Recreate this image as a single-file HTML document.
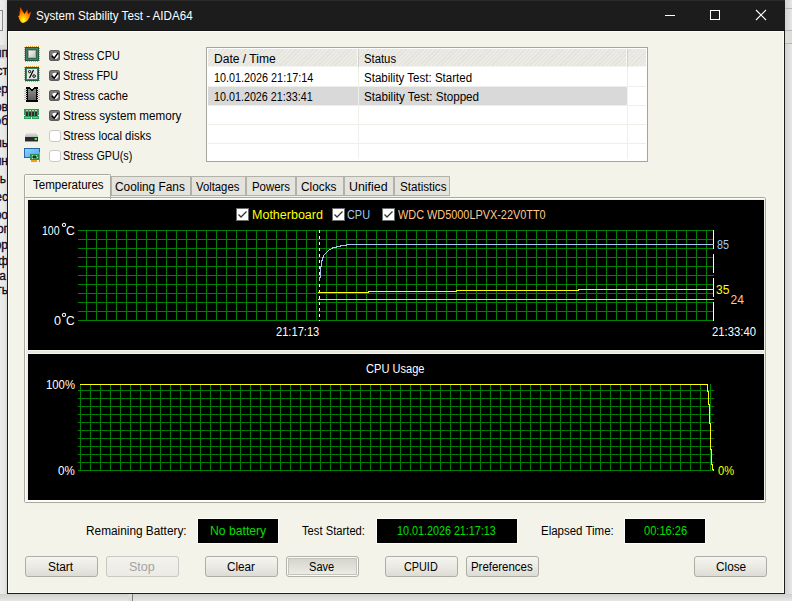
<!DOCTYPE html>
<html><head><meta charset="utf-8">
<style>
*{margin:0;padding:0;box-sizing:border-box}
html,body{width:792px;height:601px;overflow:hidden}
body{position:relative;background:#e3e3e1;font-family:"Liberation Sans",sans-serif;font-size:12px}
.a{position:absolute}
.t{position:absolute;white-space:nowrap;line-height:14px;font-size:12px;transform-origin:0 0}
.bgt{position:absolute;white-space:nowrap;font-size:12px;line-height:14px;color:#10081a;-webkit-text-stroke:0.3px #10081a}
.win{position:absolute;left:7px;top:0;width:778px;height:594px;background:#1c1c1c}
.body{position:absolute;left:8px;top:31px;width:776px;height:562px;background:#f3f3ea;border-top:1px solid #fdfdf8;border-left:1px solid #fdfdf8;border-right:1px solid #fbfbf5;border-bottom:1px solid #fbfbf5}
.cbx{position:absolute;width:12px;height:12px;border-radius:3px}
.cb-on{width:11px;height:11px;border-radius:2px;background:linear-gradient(#7c7c7c,#6a6a6a);border:1px solid #5e5e5e}
.cb-off{background:#fff;border:1px solid #c9c9c5}
.btn{position:absolute;height:21px;border:1px solid #adada6;border-radius:3px;background:linear-gradient(#f6f6f2,#e9e8e1 55%,#dddcd4)}
.tab{position:absolute;top:176px;height:20px;background:#e4e3dc;border:1px solid #b2b1aa}
.lcd{position:absolute;top:518px;height:26px;background:#000;border:1px solid #fdfdf9}
</style></head><body>
<!-- background window left -->
<div class="a" style="left:0;top:0;width:7px;height:601px;background:linear-gradient(90deg,#ececea 0,#e6e6e4 70%,#d4d4d2 100%)"></div>
<div class="a" style="left:0;top:10px;width:3px;height:21px;border:1px solid #8a8a8a;border-left:none;background:#eceef0"></div>
<div class="a" style="left:0;top:45px;width:7px;height:14px;background:#d9d9d6"></div>
<div class="a" style="left:0;top:0;width:7px;height:601px;overflow:hidden">
<div class="bgt" style="right:-1px;top:46px">ип</div>
<div class="bgt" style="right:-1px;top:64px">ст</div>
<div class="bgt" style="right:-1px;top:82px">ер</div>
<div class="bgt" style="right:-1px;top:100px">ов</div>
<div class="bgt" style="right:-1px;top:114px">об</div>
<div class="bgt" style="right:-1px;top:136px">ль</div>
<div class="bgt" style="right:-1px;top:154px">ин</div>
<div class="bgt" style="right:1px;top:172px">ь</div>
<div class="bgt" style="right:-1px;top:190px">ес</div>
<div class="bgt" style="right:-1px;top:208px">ро</div>
<div class="bgt" style="right:-1px;top:222px">ог</div>
<div class="bgt" style="right:-1px;top:238px">ор</div>
<div class="bgt" style="right:-1px;top:254px">оф</div>
<div class="bgt" style="right:1px;top:269px">а</div>
<div class="bgt" style="right:-1px;top:283px">ть</div>
</div>
<!-- background window right -->
<div class="a" style="left:785px;top:0;width:7px;height:601px;background:linear-gradient(90deg,#d2d2d0,#e6e6e4)"></div>
<div class="a" style="left:785px;top:8px;width:7px;height:1px;background:#b8b8b5"></div>
<div class="a" style="left:785px;top:30px;width:7px;height:14px;background:#dcdcd8;border-top:1px solid #b8b8b5;border-bottom:1px solid #b8b8b5"></div>
<!-- bottom shadow -->
<div class="a" style="left:0;top:594px;width:792px;height:7px;background:linear-gradient(#cfcfcd,#e6e6e4)"></div>
<div class="a" style="left:128px;top:594px;width:4px;height:7px;background:#dcdcd6"></div><div class="a" style="left:132px;top:594px;width:1px;height:7px;background:#7e7e7c"></div>

<!-- window -->
<div class="win">
  <div class="a" style="left:0;top:0;width:778px;height:1px;background:#2c2c2c"></div>
  <div class="a" style="left:0;top:30px;width:778px;height:1px;background:#121212"></div>
</div>
<div class="body"></div>
<!-- flame icon -->
<svg class="a" style="left:16px;top:5px" width="18" height="20" viewBox="0 0 18 20">
 <defs><radialGradient id="fl" cx="0.42" cy="0.82" r="0.65"><stop offset="0" stop-color="#ffff20"/><stop offset="0.35" stop-color="#ffc000"/><stop offset="0.75" stop-color="#ff7a00"/><stop offset="1" stop-color="#e84800"/></radialGradient></defs>
 <path d="M4.3 2 C5.5 4 7 6.5 8.5 9 L11.3 4.5 L12 9 L15 6.5 C14.5 10 13.5 13 11.5 15.5 C10 17 8 18 6.5 18 C4.5 17.5 3.5 15 3 13 L2 11 L3.5 10.5 C3.5 7 4 4.5 4.3 2 Z" fill="url(#fl)"/>
</svg>
<!-- title controls -->
<div class="a" style="left:665px;top:15px;width:10px;height:1px;background:#fff"></div>
<div class="a" style="left:710px;top:10px;width:10px;height:10px;border:1px solid #fff"></div>
<svg class="a" style="left:755px;top:9px" width="12" height="12" viewBox="0 0 12 12"><path d="M1 1 L11 11 M11 1 L1 11" stroke="#fff" stroke-width="1.1"/></svg>

<!-- stress icons -->
<svg class="a" style="left:24px;top:46px" width="16" height="16" shape-rendering="crispEdges"><rect x="1" y="1" width="14" height="14" fill="#1f5a3c"/><rect x="2" y="2" width="12" height="12" fill="#3f8060"/><rect x="3" y="3" width="10" height="10" fill="#2f6c4c"/><rect x="2" y="0" width="1" height="1" fill="#d9a03a"/><rect x="4" y="0" width="1" height="1" fill="#d9a03a"/><rect x="6" y="0" width="1" height="1" fill="#d9a03a"/><rect x="8" y="0" width="1" height="1" fill="#d9a03a"/><rect x="10" y="0" width="1" height="1" fill="#d9a03a"/><rect x="12" y="0" width="1" height="1" fill="#d9a03a"/><rect x="14" y="0" width="1" height="1" fill="#d9a03a"/><rect x="1" y="15" width="1" height="1" fill="#d9a03a"/><rect x="3" y="15" width="1" height="1" fill="#d9a03a"/><rect x="5" y="15" width="1" height="1" fill="#d9a03a"/><rect x="7" y="15" width="1" height="1" fill="#d9a03a"/><rect x="9" y="15" width="1" height="1" fill="#d9a03a"/><rect x="11" y="15" width="1" height="1" fill="#d9a03a"/><rect x="13" y="15" width="1" height="1" fill="#d9a03a"/><rect x="0" y="1" width="1" height="1" fill="#d9a03a"/><rect x="0" y="3" width="1" height="1" fill="#d9a03a"/><rect x="0" y="5" width="1" height="1" fill="#d9a03a"/><rect x="0" y="7" width="1" height="1" fill="#d9a03a"/><rect x="0" y="9" width="1" height="1" fill="#d9a03a"/><rect x="0" y="11" width="1" height="1" fill="#d9a03a"/><rect x="0" y="13" width="1" height="1" fill="#d9a03a"/><rect x="15" y="2" width="1" height="1" fill="#d9a03a"/><rect x="15" y="4" width="1" height="1" fill="#d9a03a"/><rect x="15" y="6" width="1" height="1" fill="#d9a03a"/><rect x="15" y="8" width="1" height="1" fill="#d9a03a"/><rect x="15" y="10" width="1" height="1" fill="#d9a03a"/><rect x="15" y="12" width="1" height="1" fill="#d9a03a"/><rect x="15" y="14" width="1" height="1" fill="#d9a03a"/><defs><linearGradient id="cpg" x1="0" y1="0" x2="1" y2="1"><stop offset="0" stop-color="#f6f6f6"/><stop offset="1" stop-color="#c4c4c4"/></linearGradient></defs><rect x="4" y="4" width="8" height="8" fill="#a8a8a8"/><rect x="5" y="5" width="6" height="6" fill="url(#cpg)"/></svg>
<svg class="a" style="left:24px;top:66px" width="16" height="16" shape-rendering="crispEdges"><rect x="1" y="1" width="14" height="14" fill="#1f5a3c"/><rect x="2" y="2" width="12" height="12" fill="#3f8060"/><rect x="3" y="3" width="10" height="10" fill="#2f6c4c"/><rect x="2" y="0" width="1" height="1" fill="#d9a03a"/><rect x="4" y="0" width="1" height="1" fill="#d9a03a"/><rect x="6" y="0" width="1" height="1" fill="#d9a03a"/><rect x="8" y="0" width="1" height="1" fill="#d9a03a"/><rect x="10" y="0" width="1" height="1" fill="#d9a03a"/><rect x="12" y="0" width="1" height="1" fill="#d9a03a"/><rect x="14" y="0" width="1" height="1" fill="#d9a03a"/><rect x="1" y="15" width="1" height="1" fill="#d9a03a"/><rect x="3" y="15" width="1" height="1" fill="#d9a03a"/><rect x="5" y="15" width="1" height="1" fill="#d9a03a"/><rect x="7" y="15" width="1" height="1" fill="#d9a03a"/><rect x="9" y="15" width="1" height="1" fill="#d9a03a"/><rect x="11" y="15" width="1" height="1" fill="#d9a03a"/><rect x="13" y="15" width="1" height="1" fill="#d9a03a"/><rect x="0" y="1" width="1" height="1" fill="#d9a03a"/><rect x="0" y="3" width="1" height="1" fill="#d9a03a"/><rect x="0" y="5" width="1" height="1" fill="#d9a03a"/><rect x="0" y="7" width="1" height="1" fill="#d9a03a"/><rect x="0" y="9" width="1" height="1" fill="#d9a03a"/><rect x="0" y="11" width="1" height="1" fill="#d9a03a"/><rect x="0" y="13" width="1" height="1" fill="#d9a03a"/><rect x="15" y="2" width="1" height="1" fill="#d9a03a"/><rect x="15" y="4" width="1" height="1" fill="#d9a03a"/><rect x="15" y="6" width="1" height="1" fill="#d9a03a"/><rect x="15" y="8" width="1" height="1" fill="#d9a03a"/><rect x="15" y="10" width="1" height="1" fill="#d9a03a"/><rect x="15" y="12" width="1" height="1" fill="#d9a03a"/><rect x="15" y="14" width="1" height="1" fill="#d9a03a"/><rect x="3" y="3" width="10" height="10" fill="#e6e6e6"/><path d="M9.5 4 L5.5 12" stroke="#000" stroke-width="1.2" shape-rendering="auto"/><rect x="4.5" y="4.5" width="2.2" height="2.2" rx="1" fill="none" stroke="#000" stroke-width="1" shape-rendering="auto"/><rect x="8.8" y="8.8" width="2.6" height="2.6" rx="1.2" fill="none" stroke="#000" stroke-width="1" shape-rendering="auto"/></svg>
<svg class="a" style="left:24px;top:87px" width="16" height="15" shape-rendering="crispEdges"><path d="M2 0 H6 L7 2 H9 L10 0 H14 V15 H2 Z" fill="#050505"/><defs><linearGradient id="chg" x1="0" y1="0" x2="0" y2="1"><stop offset="0" stop-color="#8e8e8e"/><stop offset="1" stop-color="#5c5c5c"/></linearGradient></defs><path d="M4 2 H5.5 L7 4 H9 L10.5 2 H12 V13 H4 Z" fill="url(#chg)"/><rect x="0" y="2" width="3" height="1" fill="#b4c4dc"/><rect x="13" y="2" width="3" height="1" fill="#b4c4dc"/><rect x="0" y="4" width="3" height="1" fill="#b4c4dc"/><rect x="13" y="4" width="3" height="1" fill="#b4c4dc"/><rect x="0" y="6" width="3" height="1" fill="#b4c4dc"/><rect x="13" y="6" width="3" height="1" fill="#b4c4dc"/><rect x="0" y="8" width="3" height="1" fill="#b4c4dc"/><rect x="13" y="8" width="3" height="1" fill="#b4c4dc"/><rect x="0" y="10" width="3" height="1" fill="#b4c4dc"/><rect x="13" y="10" width="3" height="1" fill="#b4c4dc"/><rect x="0" y="12" width="3" height="1" fill="#b4c4dc"/><rect x="13" y="12" width="3" height="1" fill="#b4c4dc"/></svg>
<svg class="a" style="left:24px;top:109px" width="15" height="10" shape-rendering="crispEdges"><path d="M0 0 H15 V6 H14 V7 H15 V10 H8 V8 H7 V10 H0 V7 H1 V6 H0 Z" fill="#2f9a5a"/><rect x="2" y="1" width="2" height="1" fill="#c8d8b8"/><rect x="2" y="3" width="2" height="4" fill="#3a2a30"/><rect x="5" y="1" width="2" height="1" fill="#c8d8b8"/><rect x="5" y="3" width="2" height="4" fill="#3a2a30"/><rect x="8" y="1" width="2" height="1" fill="#c8d8b8"/><rect x="8" y="3" width="2" height="4" fill="#3a2a30"/><rect x="11" y="1" width="2" height="1" fill="#c8d8b8"/><rect x="11" y="3" width="2" height="4" fill="#3a2a30"/><rect x="1" y="8" width="5" height="1" fill="#f0a030"/><rect x="9" y="8" width="5" height="1" fill="#f0a030"/></svg>
<svg class="a" style="left:25px;top:133px" width="14" height="9" shape-rendering="crispEdges"><defs><linearGradient id="dkg" x1="0" y1="0" x2="0" y2="1"><stop offset="0" stop-color="#e4e6ea"/><stop offset="1" stop-color="#b4b6ba"/></linearGradient></defs><path d="M1 0 H12 L13 4 H0 Z" fill="url(#dkg)"/><rect x="0" y="4" width="13" height="4" fill="#2a2a2a"/><rect x="0" y="8" width="13" height="1" fill="#9098a0"/><rect x="10" y="5" width="2" height="2" fill="#40f050"/><rect x="9" y="5" width="1" height="2" fill="#2a7a30"/></svg>
<svg class="a" style="left:24px;top:148px" width="16" height="14" shape-rendering="crispEdges"><defs><linearGradient id="gpg" x1="0" y1="0" x2="1" y2="1"><stop offset="0" stop-color="#90d0ff"/><stop offset="1" stop-color="#50a8f0"/></linearGradient></defs><rect x="0" y="0" width="16" height="10" fill="#1e6aa4"/><rect x="1" y="1" width="14" height="8" fill="url(#gpg)"/><rect x="6" y="6" width="9" height="6" fill="#2e8a52"/><rect x="7" y="7" width="7" height="4" fill="#3a9a60"/><rect x="9" y="8" width="3" height="2" fill="#3a2a30"/><rect x="8" y="7" width="1" height="1" fill="#d0d0d0"/><rect x="12" y="7" width="1" height="1" fill="#d0d0d0"/><rect x="8" y="10" width="1" height="1" fill="#d0d0d0"/><rect x="13" y="9" width="1" height="1" fill="#d0d0d0"/><rect x="7" y="12" width="6" height="2" fill="#f0a010"/><rect x="15" y="4" width="1" height="10" fill="#909090"/><rect x="6" y="11" width="1" height="1" fill="#4a6a9a"/></svg>
<!-- checkboxes -->
<div class="cbx cb-on" style="left:49px;top:50px"></div>
<div class="cbx cb-on" style="left:49px;top:70px"></div>
<div class="cbx cb-on" style="left:49px;top:90px"></div>
<div class="cbx cb-on" style="left:49px;top:110px"></div>
<div class="cbx cb-off" style="left:49px;top:130px"></div>
<div class="cbx cb-off" style="left:49px;top:150px"></div>
<svg class="a" style="left:49px;top:50px" width="12" height="92" viewBox="0 0 12 92">
 <g transform="translate(0 0)"><path d="M3.5 3.5 Q6 2.5 8 3 L9.5 6 Q9 8.5 7 9 L5 9 Q3 7 3.5 3.5Z" fill="#fff"/><path d="M2.8 5.8 L5.2 8.3 L9.2 2.6" fill="none" stroke="#000" stroke-width="1.5"/></g>
 <g transform="translate(0 20)"><path d="M3.5 3.5 Q6 2.5 8 3 L9.5 6 Q9 8.5 7 9 L5 9 Q3 7 3.5 3.5Z" fill="#fff"/><path d="M2.8 5.8 L5.2 8.3 L9.2 2.6" fill="none" stroke="#000" stroke-width="1.5"/></g>
 <g transform="translate(0 40)"><path d="M3.5 3.5 Q6 2.5 8 3 L9.5 6 Q9 8.5 7 9 L5 9 Q3 7 3.5 3.5Z" fill="#fff"/><path d="M2.8 5.8 L5.2 8.3 L9.2 2.6" fill="none" stroke="#000" stroke-width="1.5"/></g>
 <g transform="translate(0 60)"><path d="M3.5 3.5 Q6 2.5 8 3 L9.5 6 Q9 8.5 7 9 L5 9 Q3 7 3.5 3.5Z" fill="#fff"/><path d="M2.8 5.8 L5.2 8.3 L9.2 2.6" fill="none" stroke="#000" stroke-width="1.5"/></g>

</svg>

<!-- list view -->
<div class="a" style="left:206px;top:47px;width:442px;height:115px;background:#fff;border:1px solid #a5a5a0"></div>
<div class="a" style="left:208px;top:49px;width:438px;height:18px;background:repeating-linear-gradient(135deg,#ebeae4 0 2px,#e3e2db 2px 3px);border-bottom:1px solid #f4f4f0"></div>
<div class="a" style="left:357px;top:49px;width:1px;height:18px;background:#f8f8f4"></div>
<div class="a" style="left:358px;top:49px;width:1px;height:18px;background:#d2d1ca"></div>
<div class="a" style="left:626px;top:49px;width:1px;height:18px;background:#f8f8f4"></div>
<div class="a" style="left:627px;top:49px;width:1px;height:18px;background:#d2d1ca"></div>
<div class="a" style="left:208px;top:87px;width:419px;height:18px;background:#d9d9d9"></div>
<div class="a" style="left:358px;top:67px;width:1px;height:92px;background:#efefe9"></div>
<div class="a" style="left:627px;top:67px;width:1px;height:92px;background:#efefe9"></div>
<div class="a" style="left:208px;top:86px;width:438px;height:1px;background:#efefe9"></div>
<div class="a" style="left:208px;top:105px;width:438px;height:1px;background:#efefe9"></div>
<div class="a" style="left:208px;top:124px;width:438px;height:1px;background:#efefe9"></div>
<div class="a" style="left:208px;top:143px;width:438px;height:1px;background:#efefe9"></div>

<!-- tabs -->
<div class="tab" style="left:111px;width:80px"></div>
<div class="tab" style="left:191px;width:55px"></div>
<div class="tab" style="left:246px;width:50px"></div>
<div class="tab" style="left:296px;width:48px"></div>
<div class="tab" style="left:344px;width:50px"></div>
<div class="tab" style="left:394px;width:56px"></div>
<!-- panel -->
<div class="a" style="left:24px;top:197px;width:742px;height:306px;background:#efeee7;border:1px solid #a9a8a1;border-radius:2px"></div>
<div class="a" style="left:25px;top:198px;width:740px;height:304px;border-left:1px solid #fdfdf8;border-top:1px solid #fdfdf8;border-bottom:2px solid #fdfdf8;border-right:1px solid #f0efe8"></div>
<!-- selected tab -->
<div class="a" style="left:24px;top:174px;width:87px;height:25px;background:#f3f3ea;border:1px solid #a9a8a1;border-bottom:none;border-radius:2px 2px 0 0"></div>
<div class="a" style="left:25px;top:175px;width:85px;height:24px;border-left:1px solid #fdfdf8;border-top:1px solid #fdfdf8"></div>
<div class="a" style="left:25px;top:197px;width:85px;height:1px;background:#a9a8a1"></div>
<div class="a" style="left:25px;top:198px;width:85px;height:1px;background:#fdfdf8"></div>
<!-- graphs -->
<div class="a" style="left:28px;top:200px;width:736px;height:150px;background:#000"></div>
<div class="a" style="left:28px;top:350px;width:736px;height:4px;background:#e7e6df;border-top:1px solid #f3f3ec;border-bottom:1px solid #f3f3ec"></div>
<div class="a" style="left:28px;top:354px;width:736px;height:146px;background:#000"></div>
<svg class="a" style="left:0;top:0" width="792" height="601" shape-rendering="crispEdges"><path d="M78 230.5H714M78 239.5H714M78 248.5H714M78 257.5H714M78 266.5H714M78 275.5H714M78 284.5H714M78 293.5H714M78 302.5H714M78 311.5H714M78 320.5H714M86.5 230V321M96.5 230V321M106.5 230V321M116.5 230V321M126.5 230V321M136.5 230V321M146.5 230V321M156.5 230V321M166.5 230V321M176.5 230V321M186.5 230V321M196.5 230V321M206.5 230V321M216.5 230V321M226.5 230V321M236.5 230V321M246.5 230V321M256.5 230V321M266.5 230V321M276.5 230V321M286.5 230V321M296.5 230V321M306.5 230V321M316.5 230V321M326.5 230V321M336.5 230V321M346.5 230V321M356.5 230V321M366.5 230V321M376.5 230V321M386.5 230V321M396.5 230V321M406.5 230V321M416.5 230V321M426.5 230V321M436.5 230V321M446.5 230V321M456.5 230V321M466.5 230V321M476.5 230V321M486.5 230V321M496.5 230V321M506.5 230V321M516.5 230V321M526.5 230V321M536.5 230V321M546.5 230V321M556.5 230V321M566.5 230V321M576.5 230V321M586.5 230V321M596.5 230V321M606.5 230V321M616.5 230V321M626.5 230V321M636.5 230V321M646.5 230V321M656.5 230V321M666.5 230V321M676.5 230V321M686.5 230V321M696.5 230V321M706.5 230V321" stroke="#008000" stroke-width="1" fill="none"/><path d="M713.5 230V249M713.5 254V273M713.5 278V297M713.5 302V321" stroke="#fff" stroke-width="1"/><path d="M319.5 230V321" stroke="#fff" stroke-width="1" stroke-dasharray="3 3"/><path d="M318 299.5H714" stroke="#ffc880" stroke-width="1"/><path d="M318 292.5H368.5V291.5H456.5V290.5H578.5V289.5H714" stroke="#ffff00" stroke-width="1" fill="none"/><path d="M318.5 280.5H319.5V277.5H320.5V266.5H321.5V260.5H322.5V257.5H323.5V255.5L325.5 253.5L328.5 250.5L331.5 248.5H332.5V247.5H336.5V246.5H340.5V245.5H346.5V244.5H714" stroke="#a8c8f4" stroke-width="1" fill="none"/><path d="M78 390.5H714M78 398.5H714M78 406.5H714M78 414.5H714M78 422.5H714M78 430.5H714M78 438.5H714M78 446.5H714M78 454.5H714M78 462.5H714M78 470.5H714M80.5 384V471M90.5 384V471M100.5 384V471M110.5 384V471M120.5 384V471M130.5 384V471M140.5 384V471M150.5 384V471M160.5 384V471M170.5 384V471M180.5 384V471M190.5 384V471M200.5 384V471M210.5 384V471M220.5 384V471M230.5 384V471M240.5 384V471M250.5 384V471M260.5 384V471M270.5 384V471M280.5 384V471M290.5 384V471M300.5 384V471M310.5 384V471M320.5 384V471M330.5 384V471M340.5 384V471M350.5 384V471M360.5 384V471M370.5 384V471M380.5 384V471M390.5 384V471M400.5 384V471M410.5 384V471M420.5 384V471M430.5 384V471M440.5 384V471M450.5 384V471M460.5 384V471M470.5 384V471M480.5 384V471M490.5 384V471M500.5 384V471M510.5 384V471M520.5 384V471M530.5 384V471M540.5 384V471M550.5 384V471M560.5 384V471M570.5 384V471M580.5 384V471M590.5 384V471M600.5 384V471M610.5 384V471M620.5 384V471M630.5 384V471M640.5 384V471M650.5 384V471M660.5 384V471M670.5 384V471M680.5 384V471M690.5 384V471M700.5 384V471M710.5 384V471" stroke="#008000" stroke-width="1" fill="none"/><path d="M80 384.5H707.5V391H708.5V404H709.5V423H710.5V449H711.5V464H712.5V469H713.5V471" stroke="#ffff00" stroke-width="1" fill="none"/></svg>
<!-- legend checkboxes -->
<svg class="a" style="left:236px;top:208px" width="160" height="14" viewBox="0 0 160 14">
 <g transform="translate(0 0)"><rect x="0.5" y="0.5" width="12" height="12" fill="#fff" stroke="#6d6d6d"/><path d="M2.5 6.5 L5 9 L10.5 3.5" fill="none" stroke="#333" stroke-width="1.3"/></g>
 <g transform="translate(96 0)"><rect x="0.5" y="0.5" width="12" height="12" fill="#fff" stroke="#6d6d6d"/><path d="M2.5 6.5 L5 9 L10.5 3.5" fill="none" stroke="#333" stroke-width="1.3"/></g>
 <g transform="translate(146 0)"><rect x="0.5" y="0.5" width="12" height="12" fill="#fff" stroke="#6d6d6d"/><path d="M2.5 6.5 L5 9 L10.5 3.5" fill="none" stroke="#333" stroke-width="1.3"/></g>

</svg>
<!-- degree symbols -->
<svg class="a" style="left:60px;top:221px" width="8" height="8"><circle cx="4" cy="3.9" r="1.6" fill="none" stroke="#fff" stroke-width="1.1"/></svg>
<svg class="a" style="left:59.8px;top:311px" width="8" height="8"><circle cx="4" cy="3.9" r="1.6" fill="none" stroke="#fff" stroke-width="1.1"/></svg>

<!-- lcds -->
<div class="lcd" style="left:197px;width:82px"></div>
<div class="lcd" style="left:376px;width:142px"></div>
<div class="lcd" style="left:624px;width:82px"></div>
<!-- buttons -->
<div class="btn" style="left:25px;width:73px"></div>
<div class="btn" style="left:106px;width:73px;border-color:#c8c7c0;background:linear-gradient(#f3f3ef,#ebeae3)"></div>
<div class="btn" style="left:205px;width:73px"></div>
<div class="btn" style="left:286px;width:73px;border-color:#b2b1aa;background:linear-gradient(#d3d2ca,#e2e1da 55%,#eeede6);box-shadow:inset 0 0 0 1px #fbfbf7,inset 0 0 0 2px #c4c3bc"></div>
<div class="btn" style="left:385px;width:73px"></div>
<div class="btn" style="left:466px;width:73px"></div>
<div class="btn" style="left:694px;width:73px"></div>
<style>.btn{top:556px}</style>
<div class=t style='left:36.23px;top:9px;color:#ffffff;transform:scaleX(0.9677)'>System Stability Test - AIDA64</div>
<div class=t style='left:63.19px;top:49px;color:#000;transform:scaleX(0.9066)'>Stress CPU</div>
<div class=t style='left:63.20px;top:69px;color:#000;transform:scaleX(0.8950)'>Stress FPU</div>
<div class=t style='left:63.16px;top:89px;color:#000;transform:scaleX(0.9353)'>Stress cache</div>
<div class=t style='left:63.13px;top:109px;color:#000;transform:scaleX(0.9702)'>Stress system memory</div>
<div class=t style='left:63.15px;top:129px;color:#000;transform:scaleX(0.9505)'>Stress local disks</div>
<div class=t style='left:63.20px;top:149px;color:#000;transform:scaleX(0.8961)'>Stress GPU(s)</div>
<div class=t style='left:213.59px;top:52px;color:#000;transform:scaleX(1.0067)'>Date / Time</div>
<div class=t style='left:363.66px;top:52px;color:#000;transform:scaleX(0.9424)'>Status</div>
<div class=t style='left:213.70px;top:71px;color:#000;transform:scaleX(0.9009)'>10.01.2026 21:17:14</div>
<div class=t style='left:363.64px;top:71px;color:#000;transform:scaleX(0.9604)'>Stability Test: Started</div>
<div class=t style='left:213.70px;top:90px;color:#000;transform:scaleX(0.8963)'>10.01.2026 21:33:41</div>
<div class=t style='left:363.63px;top:90px;color:#000;transform:scaleX(0.9709)'>Stability Test: Stopped</div>
<div class=t style='left:32.70px;top:178px;color:#000;transform:scaleX(0.9630)'>Temperatures</div>
<div class=t style='left:114.51px;top:180px;color:#000;transform:scaleX(0.9884)'>Cooling Fans</div>
<div class=t style='left:196.20px;top:180px;color:#000;transform:scaleX(0.9413)'>Voltages</div>
<div class=t style='left:251.55px;top:180px;color:#000;transform:scaleX(0.9513)'>Powers</div>
<div class=t style='left:301.31px;top:180px;color:#000;transform:scaleX(0.9857)'>Clocks</div>
<div class=t style='left:348.97px;top:180px;color:#000;transform:scaleX(1.0333)'>Unified</div>
<div class=t style='left:399.53px;top:180px;color:#000;transform:scaleX(0.9681)'>Statistics</div>
<div class=t style='left:251.66px;top:208px;color:#ffff00;transform:scaleX(1.0424)'>Motherboard</div>
<div class=t style='left:347.49px;top:208px;color:#a0c8f8;transform:scaleX(0.9083)'>CPU</div>
<div class=t style='left:397.50px;top:208px;color:#ffc888;transform:scaleX(0.9074)'>WDC WD5000LPVX-22V0TT0</div>
<div class=t style='left:42.12px;top:224px;color:#fff;transform:scaleX(0.8789)'>100</div>
<div class=t style='left:65.99px;top:224px;color:#fff;transform:scaleX(1.0143)'>C</div>
<div class=t style='left:53.90px;top:314px;color:#fff;transform:scaleX(1.0500)'>0</div>
<div class=t style='left:66.00px;top:314px;color:#fff;transform:scaleX(1.0000)'>C</div>
<div class=t style='left:275.97px;top:325px;color:#fff;transform:scaleX(0.9267)'>21:17:13</div>
<div class=t style='left:712.06px;top:325px;color:#fff;transform:scaleX(0.9422)'>21:33:40</div>
<div class=t style='left:717.00px;top:238px;color:#a0c8f8;transform:scaleX(0.9000)'>85</div>
<div class=t style='left:716.00px;top:283px;color:#ffff00;transform:scaleX(1.0000)'>35</div>
<div class=t style='left:730.50px;top:293px;color:#ffc888;transform:scaleX(1.0000)'>24</div>
<div class=t style='left:366.38px;top:362px;color:#fff;transform:scaleX(0.9226)'>CPU Usage</div>
<div class=t style='left:45.76px;top:378px;color:#fff;transform:scaleX(0.9448)'>100%</div>
<div class=t style='left:57.70px;top:464px;color:#fff;transform:scaleX(0.9647)'>0%</div>
<div class=t style='left:717.50px;top:464px;color:#ffff00;transform:scaleX(0.9294)'>0%</div>
<div class=t style='left:85.51px;top:524px;color:#000;transform:scaleX(0.9860)'>Remaining Battery:</div>
<div class=t style='left:209.59px;top:524px;color:#00e000;transform:scaleX(1.0148)'>No battery</div>
<div class=t style='left:302.30px;top:524px;color:#000;transform:scaleX(0.9348)'>Test Started:</div>
<div class=t style='left:397.00px;top:524px;color:#00e000;transform:scaleX(0.8972)'>10.01.2026 21:17:13</div>
<div class=t style='left:540.54px;top:524px;color:#000;transform:scaleX(0.9568)'>Elapsed Time:</div>
<div class=t style='left:643.90px;top:524px;color:#00e000;transform:scaleX(0.9239)'>00:16:26</div>
<div class=t style='left:48.01px;top:560px;color:#000;transform:scaleX(0.9917)'>Start</div>
<div class=t style='left:129.16px;top:560px;color:#a3a3a0;transform:scaleX(1.0435)'>Stop</div>
<div class=t style='left:227.03px;top:560px;color:#000;transform:scaleX(0.9750)'>Clear</div>
<div class=t style='left:309.18px;top:560px;color:#000;transform:scaleX(0.9231)'>Save</div>
<div class=t style='left:403.90px;top:560px;color:#000;transform:scaleX(0.9028)'>CPUID</div>
<div class=t style='left:471.45px;top:560px;color:#000;transform:scaleX(0.9524)'>Preferences</div>
<div class=t style='left:715.52px;top:560px;color:#000;transform:scaleX(0.9828)'>Close</div>
</body></html>
